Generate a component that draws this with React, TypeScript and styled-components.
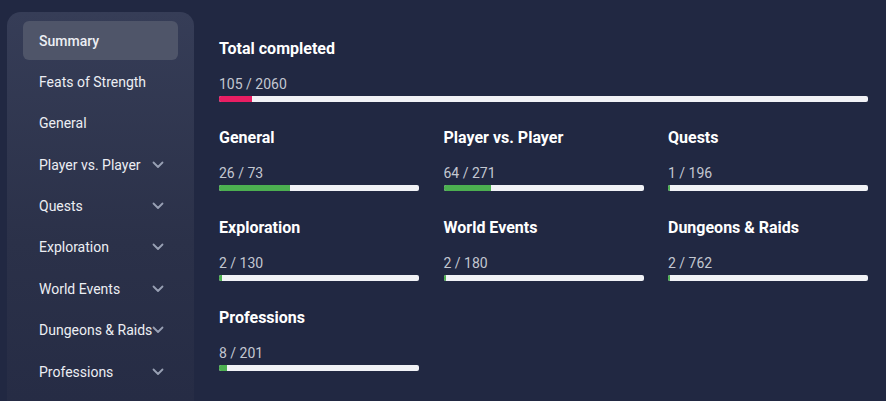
import styled, { createGlobalStyle } from "styled-components";

const GlobalStyle = createGlobalStyle`
  html, body {
    margin: 0;
    padding: 0;
    background: #212842;
    font-family: Roboto, "Liberation Sans", sans-serif;
  }
`;

type Category = { name: string; done: number; total: number };

const MENU = [
  { label: "Summary", active: true },
  { label: "Feats of Strength" },
  { label: "General" },
  { label: "Player vs. Player", sub: true },
  { label: "Quests", sub: true },
  { label: "Exploration", sub: true },
  { label: "World Events", sub: true },
  { label: "Dungeons & Raids", sub: true },
  { label: "Professions", sub: true },
];

const CATEGORIES: Category[] = [
  { name: "General", done: 26, total: 73 },
  { name: "Player vs. Player", done: 64, total: 271 },
  { name: "Quests", done: 1, total: 196 },
  { name: "Exploration", done: 2, total: 130 },
  { name: "World Events", done: 2, total: 180 },
  { name: "Dungeons & Raids", done: 2, total: 762 },
  { name: "Professions", done: 8, total: 201 },
];

const Chevron = () => (
  <svg width="12" height="8" viewBox="0 0 12 8" fill="none">
    <path d="M1.5 1.5L6 6L10.5 1.5" stroke="#98a0b4" strokeWidth="1.8" strokeLinecap="round" strokeLinejoin="round" />
  </svg>
);

const Progress = ({ done, total, color }: { done: number; total: number; color: string }) => (
  <Track>
    <Fill $color={color} style={{ width: `${(done / total) * 100}%` }} />
  </Track>
);

const App = () => {
  return (
    <Page>
      <GlobalStyle />
      <Sidebar>
        {MENU.map((item) => (
          <MenuItem key={item.label} $active={!!item.active}>
            <span>{item.label}</span>
            {item.sub && <Chevron />}
          </MenuItem>
        ))}
      </Sidebar>
      <Content>
        <Block>
          <Heading>Total completed</Heading>
          <Count>105 / 2060</Count>
          <Progress done={105} total={2060} color="#e91e63" />
        </Block>
        <Grid>
          {CATEGORIES.map((c) => (
            <Block key={c.name}>
              <Heading>{c.name}</Heading>
              <Count>
                {c.done} / {c.total}
              </Count>
              <Progress done={c.done} total={c.total} color="#4caf50" />
            </Block>
          ))}
        </Grid>
      </Content>
    </Page>
  );
};

export default App;

const Page = styled.div`
  width: 886px;
  height: 401px;
  overflow: hidden;
  display: flex;
  align-items: flex-start;
  background: #212842;
`;

const Sidebar = styled.nav`
  margin: 12px 0 0 7px;
  width: 187px;
  height: 420px;
  box-sizing: border-box;
  padding: 9px 16px;
  border-radius: 14px;
  background: linear-gradient(180deg, #363d57 0%, #2b3149 55%, #252b44 100%);
  display: flex;
  flex-direction: column;
  gap: 2.4px;
  flex-shrink: 0;
`;

const MenuItem = styled.div<{ $active: boolean }>`
  height: 39px;
  display: flex;
  align-items: center;
  justify-content: space-between;
  padding: 0 14px 0 16px;
  border-radius: 6px;
  background: ${(p) => (p.$active ? "#4f5569" : "transparent")};
  color: #eceef3;
  font-size: 14px;
  font-weight: ${(p) => (p.$active ? 500 : 400)};
  white-space: nowrap;

  svg {
    flex-shrink: 0;
    margin-left: -4px;
  }
`;

const Content = styled.main`
  flex: 1;
  padding: 39px 19px 0 25px;
  display: flex;
  flex-direction: column;
  gap: 26px;
`;

const Grid = styled.div`
  display: grid;
  grid-template-columns: repeat(3, 200px);
  column-gap: 24.5px;
  row-gap: 27px;
`;

const Block = styled.div`
  display: flex;
  flex-direction: column;
`;

const Heading = styled.div`
  color: #ffffff;
  font-size: 16px;
  font-weight: 700;
  line-height: 20px;
`;

const Count = styled.div`
  margin-top: 17px;
  color: #c3c7d1;
  font-size: 14px;
  line-height: 16px;
`;

const Track = styled.div`
  margin-top: 4px;
  height: 6px;
  border-radius: 2px;
  background: #f1f2f6;
  overflow: hidden;
`;

const Fill = styled.div<{ $color: string }>`
  height: 100%;
  min-width: 2px;
  background: ${(p) => p.$color};
`;
